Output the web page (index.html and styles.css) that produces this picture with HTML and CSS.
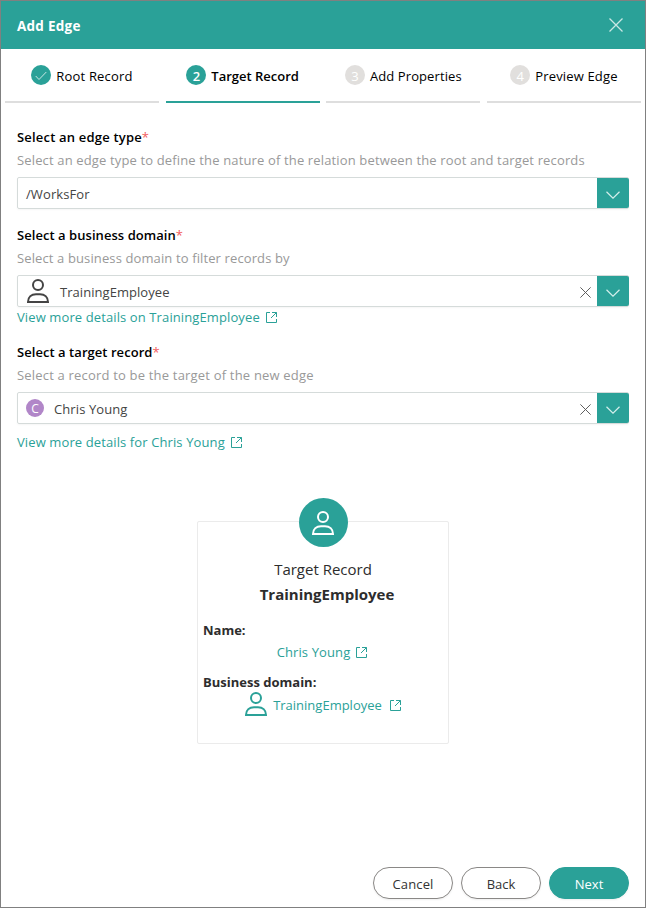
FILE: index.html
```html
<!DOCTYPE html>
<html lang="en">
<head>
<meta charset="utf-8">
<title>Add Edge</title>
<link rel="stylesheet" href="styles.css">
</head>
<body>
<svg class="defs" aria-hidden="true">
  <symbol id="person" viewBox="0 0 24 26"><circle cx="12" cy="7" r="5"/><path d="M2 24c0-5 3.500-7.800 8-7.800h4c4.500 0 8 2.800 8 7.800z"/></symbol>
  <symbol id="chevron" viewBox="0 0 14 8"><path d="M.5 .8 7 7.200 13.500 .8"/></symbol>
  <symbol id="cross" viewBox="0 0 14 14"><path d="M.5 .5l13 13M13.500 .5l-13 13"/></symbol>
  <symbol id="open" viewBox="0 0 11 11"><path d="M4 .5H.5v10h10V7M6 .5h4.500V5M10.500 .5 5 6"/></symbol>
</svg>
<div class="dialog">
  <header class="header"><h1>Add Edge</h1><svg class="close"><use href="#cross"/></svg></header>
  <nav class="steps">
    <div class="step done"><span class="dot"><svg class="check" viewBox="0 0 12 10"><path d="M.7 5 4 8.500 11.300 1"/></svg></span><span class="s1">Root Record</span></div>
    <div class="step active"><span class="dot">2</span><span class="s2">Target Record</span></div>
    <div class="step"><span class="dot">3</span><span class="s3">Add Properties</span></div>
    <div class="step"><span class="dot">4</span><span class="s4">Preview Edge</span></div>
  </nav>
  <main class="form">
    <section class="field edge">
      <label><span class="l1">Select an edge type</span><i>*</i></label>
      <p class="hint h1">Select an edge type to define the nature of the relation between the root and target records</p>
      <div class="select"><span class="value v1">/WorksFor</span><span class="drop"><svg><use href="#chevron"/></svg></span></div>
    </section>
    <section class="field domain">
      <label><span class="l2">Select a business domain</span><i>*</i></label>
      <p class="hint h2">Select a business domain to filter records by</p>
      <div class="select"><svg class="person"><use href="#person"/></svg><span class="value v2">TrainingEmployee</span><svg class="clear"><use href="#cross"/></svg><span class="drop"><svg><use href="#chevron"/></svg></span></div>
      <a class="link"><span class="k1">View more details on TrainingEmployee</span><svg class="open"><use href="#open"/></svg></a>
    </section>
    <section class="field target">
      <label><span class="l3">Select a target record</span><i>*</i></label>
      <p class="hint h3">Select a record to be the target of the new edge</p>
      <div class="select"><span class="avatar">C</span><span class="value v3">Chris Young</span><svg class="clear"><use href="#cross"/></svg><span class="drop"><svg><use href="#chevron"/></svg></span></div>
      <a class="link"><span class="k2">View more details for Chris Young</span><svg class="open"><use href="#open"/></svg></a>
    </section>
    <article class="card">
      <div class="badge"><svg class="person"><use href="#person"/></svg></div>
      <p class="kind"><span>Target Record</span></p>
      <h2><span>TrainingEmployee</span></h2>
      <h3 class="name"><span>Name:</span></h3>
      <a class="link person-link"><span class="k3">Chris Young</span><svg class="open"><use href="#open"/></svg></a>
      <h3 class="biz"><span>Business domain:</span></h3>
      <a class="link domain-link"><svg class="person"><use href="#person"/></svg><span class="k4">TrainingEmployee</span><svg class="open"><use href="#open"/></svg></a>
    </article>
  </main>
  <footer class="footer"><button><span class="b1">Cancel</span></button><button><span class="b2">Back</span></button><button class="primary"><span class="b3">Next</span></button></footer>
</div>
</body>
</html>
```
FILE: styles.css
```css
* { box-sizing: border-box; }
body { margin: 0; font: 13px/20px "Open Sans", sans-serif; color: #333; }
h1, h2, h3, p { margin: 0; }
svg { fill: none; stroke: currentColor; flex: none; overflow: visible; }
span { white-space: nowrap; }
.defs { position: absolute; width: 0; height: 0; }
.dialog { width: 646px; height: 908px; border: 1px solid #808080; background: #fff; display: flex; flex-direction: column; }
.header { height: 48px; padding: 0 22px 0 16px; background: #2aa198; color: #fff; display: flex; align-items: center; justify-content: space-between; }
.header h1 { font-size: 13.5px; line-height: 20px; font-weight: 700; padding-top: 2px; letter-spacing: .25px; }
.close { width: 14px; height: 14px; color: #c9e8e5; stroke-width: 1.3; }
.steps { height: 54px; padding: 0 4px; display: grid; grid-template-columns: repeat(4, 154px); justify-content: space-between; }
.step { border-bottom: 2px solid #dedede; display: flex; justify-content: center; align-items: center; gap: 5px; color: #000; padding-top: 2px; }
.step.active { border-color: #2aa198; font-weight: 600; }
.dot { width: 20px; height: 20px; margin-top: -2px; border-radius: 50%; background: #e1dfdd; color: #fff; display: flex; align-items: center; justify-content: center; padding-top: 1px; }
.done .dot, .active .dot { background: #2aa198; }
.check { width: 12px; height: 10px; stroke-width: 1; color: #c9e8e5; }
.s1 { letter-spacing: .18px; }
.s3 { letter-spacing: .1px; }
.s4 { letter-spacing: .15px; }
.form { flex: 1; padding: 24px 16px 0; }
.field { display: flex; flex-direction: column; }
.field label { color: #000; font-weight: 600; height: 20px; }
.field i { color: #f25c5c; font-style: normal; font-weight: 400; }
.l1 { letter-spacing: .19px; }
.l2, .l3 { letter-spacing: .05px; }
.hint { color: #999; margin-top: 3px; height: 20px; letter-spacing: .145px; }
.h2 { letter-spacing: .12px; }
.h3 { letter-spacing: .19px; }
.select { height: 32px; margin-top: 7px; border: 1px solid #d5dbda; border-radius: 2px; display: flex; align-items: center; padding-left: 8px; color: #444; box-shadow: 0 1px 2px #0000000a; }
.value { flex: 1; padding-top: 2px; letter-spacing: .1px; }
.v2 { letter-spacing: .05px; }
.drop { width: 32px; height: 30px; margin-right: -1px; background: #2aa198; color: #d4efec; border-radius: 0 2px 2px 0; display: flex; align-items: center; justify-content: center; padding-top: 3px; }
.drop svg { width: 14px; height: 8px; stroke-width: 1.2; }
.clear { width: 11px; height: 11px; margin: 2px 6px 0 0; stroke-width: 1.2; color: #555; }
.person { width: 24px; height: 26px; stroke-width: 2; }
.domain { margin-top: 16px; }
.domain .person { margin-right: 10px; }
.target { margin-top: 15px; }
.link { color: #2aa198; display: flex; align-items: center; height: 20px; gap: 6px; letter-spacing: .11px; }
.target .link { margin-top: 8px; }
.open { width: 11px; height: 11px; margin-top: 1px; }
.avatar { width: 18px; height: 18px; margin-right: 10px; border-radius: 50%; background: #b186c8; color: #fff; font-size: 12px; line-height: 19px; text-align: center; }
.card { width: 252px; height: 223px; margin: 69px auto 0; border: 1px solid #ebebeb; border-radius: 2px; color: #2d2d2d; display: flex; flex-direction: column; align-items: center; }
.badge { width: 49px; height: 49px; margin-top: -24px; border-radius: 50%; background: #2aa198; color: #fff; display: flex; align-items: center; justify-content: center; }
.kind { font-size: 15px; line-height: 24px; margin-top: 10px; }
.card h2 { font-size: 15px; line-height: 24px; margin: 1px 0 0 8px; font-weight: 700; }
.card h3 { font-size: 13px; line-height: 20px; align-self: flex-start; padding-left: 5px; font-weight: 700; }
.name { margin-top: 14px; }
.person-link { margin-top: 2px; margin-left: -2px; }
.biz { margin-top: 10px; }
.domain-link { height: 26px; margin-top: -1px; letter-spacing: 0; margin-left: -1px; }
.domain-link .person { margin-right: -1px; }
.domain-link .open { margin-left: 2px; margin-top: 3px; }
.domain-link .k4 { padding-top: 1px; }
.footer { display: flex; justify-content: flex-end; gap: 8px; padding: 0 16px 8px; }
button { width: 80px; height: 32px; padding: 2px 0 0; border: 1px solid #8a8886; border-radius: 16px; background: #fff; color: #333; font: inherit; box-shadow: 0 1px 2px #0001; }
button.primary { background: #2aa198; border-color: #2aa198; color: #fff; }
.b1 { letter-spacing: .15px; }
```
